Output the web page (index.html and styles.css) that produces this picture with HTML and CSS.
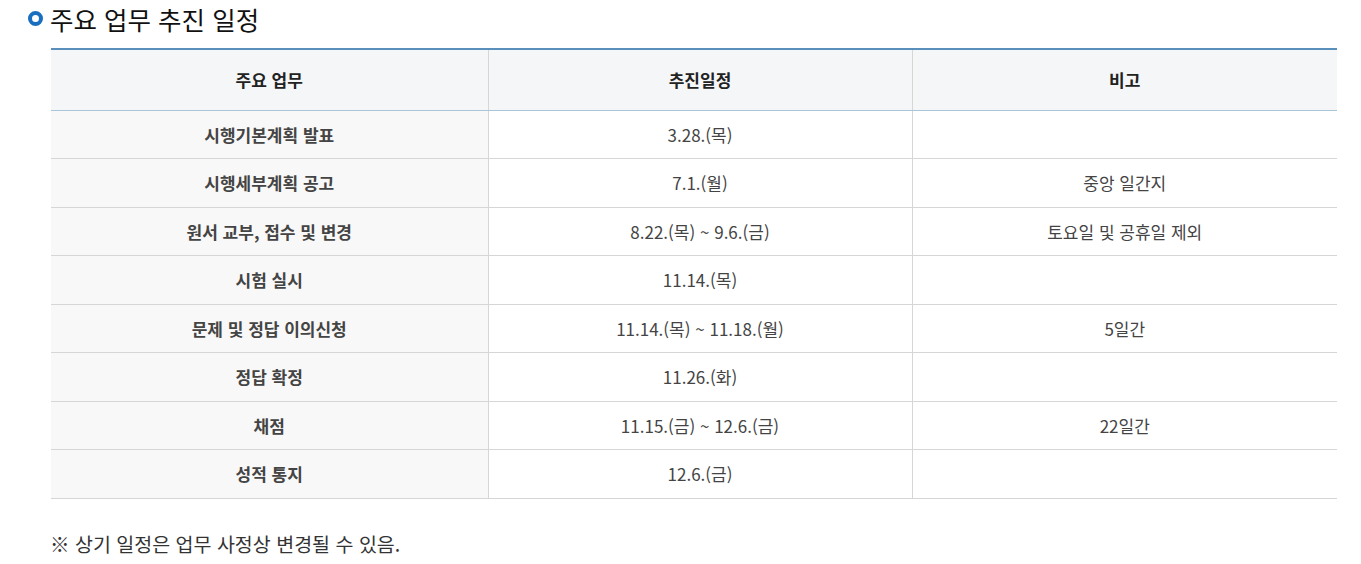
FILE: index.html
```html
<!DOCTYPE html>
<html lang="ko">
<head>
<meta charset="utf-8">
<link rel="stylesheet" href="styles.css">
</head>
<body>
<div class="page">
  <h2 class="title"><span class="ring"></span>주요 업무 추진 일정</h2>
  <table class="sched">
    <thead>
      <tr><th class="c1">주요 업무</th><th class="c2">추진일정</th><th class="c3">비고</th></tr>
    </thead>
    <tbody>
      <tr><th>시행기본계획 발표</th><td>3.28.(목)</td><td></td></tr>
      <tr><th>시행세부계획 공고</th><td>7.1.(월)</td><td>중앙 일간지</td></tr>
      <tr><th>원서 교부, 접수 및 변경</th><td>8.22.(목) ~ 9.6.(금)</td><td>토요일 및 공휴일 제외</td></tr>
      <tr><th>시험 실시</th><td>11.14.(목)</td><td></td></tr>
      <tr><th>문제 및 정답 이의신청</th><td>11.14.(목) ~ 11.18.(월)</td><td>5일간</td></tr>
      <tr><th>정답 확정</th><td>11.26.(화)</td><td></td></tr>
      <tr><th>채점</th><td>11.15.(금) ~ 12.6.(금)</td><td>22일간</td></tr>
      <tr><th>성적 통지</th><td>12.6.(금)</td><td></td></tr>
    </tbody>
  </table>
  <p class="note">※ 상기 일정은 업무 사정상 변경될 수 있음.</p>
</div>
</body>
</html>
```
FILE: styles.css
```css
* { box-sizing: border-box; }
html, body { margin: 0; padding: 0; background: #fff; }
body {
  font-family: "Noto Sans CJK KR", "Noto Sans", sans-serif;
  color: #333;
}
.page { padding: 0 24px 0 28px; }
.title {
  margin: 0;
  height: 36px;
  display: flex;
  align-items: center;
  font-size: 25.5px;
  font-weight: 400;
  color: #111;
  letter-spacing: 0;
}
.ring {
  width: 15px;
  height: 15px;
  border: 4px solid #1a6ec0;
  border-radius: 50%;
  margin-right: 7px;
  flex: none;
}
.sched {
  margin: 12px 0 0 23px;
  width: calc(100% - 23px);
  border-collapse: collapse;
  border-top: 2px solid #5a8fbb;
  font-size: 17px;
  table-layout: fixed;
}
.sched th, .sched td {
  text-align: center;
  vertical-align: middle;
  padding: 0;
  border-bottom: 1px solid #d6d6d6;
  border-left: 1px solid #d6d6d6;
}
.sched th:first-child { border-left: none; }
.sched thead th {
  height: 61px;
  background: #f5f6f8;
  font-weight: 700;
  color: #222;
  border-bottom: 1px solid #a9c5d8;
}
.sched .c1 { width: 437px; }
.sched .c2 { width: 424px; }
.sched tbody th {
  height: 48.5px;
  background: #f8f8f8;
  font-weight: 700;
  color: #444;
}
.sched tbody td {
  height: 48.5px;
  color: #444;
  font-weight: 400;
}
.note {
  margin: 30px 0 0 22px;
  font-size: 19.5px;
  color: #333;
}
```
